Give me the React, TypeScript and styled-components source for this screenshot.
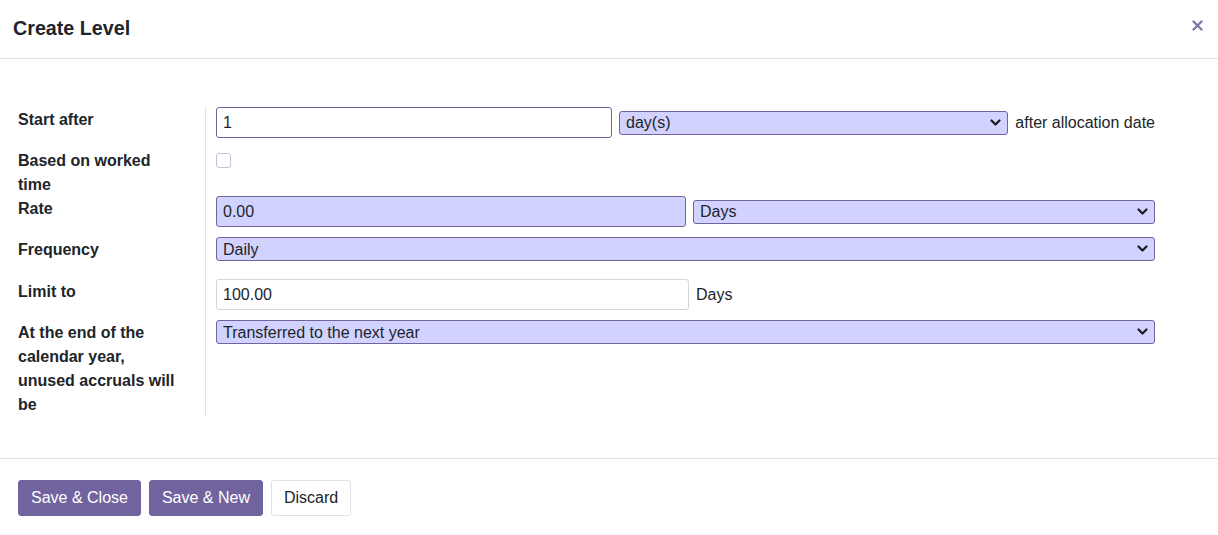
import React from "react";
import styled, { createGlobalStyle } from "styled-components";

const GlobalStyle = createGlobalStyle`
  html, body { margin: 0; padding: 0; background: #ffffff; }
  body { font-family: "Liberation Sans", Arial, sans-serif; color: #212529; }
  * { box-sizing: border-box; }
`;

const Dialog = styled.div`
  width: 1218px;
  min-height: 535px;
  background: #fff;
  display: flex;
  flex-direction: column;
  & > * { flex-shrink: 0; }
`;

const Header = styled.header`
  height: 59px;
  border-bottom: 1px solid #dee2e6;
  display: flex;
  align-items: center;
  justify-content: space-between;
  padding: 0 14px 2px 13px;
`;

const Title = styled.h4`
  margin: 0;
  font-size: 19.7px;
  font-weight: 700;
  color: #212529;
  line-height: 24px;
`;

const CloseButton = styled.button`
  border: 0;
  background: transparent;
  padding: 0;
  width: 14px;
  height: 14px;
  display: flex;
  align-items: center;
  justify-content: center;
  cursor: pointer;
  margin-top: -6px;
`;

const Body = styled.div`
  padding: 48px 0 42px 18px;
  border-bottom: 1px solid #dee2e6;
`;

const FormGrid = styled.div`
  display: grid;
  grid-template-columns: 187px 950px;
`;

const Label = styled.div<{ $pb: number; $mb?: number }>`
  font-size: 16px;
  font-weight: 700;
  line-height: 24px;
  padding-top: 1px;
  padding-right: 20px;
  padding-bottom: ${(p) => p.$pb}px;
  margin-bottom: ${(p) => p.$mb ?? 0}px;
  color: #212529;
`;

const Field = styled.div<{ $pb: number }>`
  border-left: 1px solid #dee2e6;
  padding-left: 10px;
  padding-bottom: ${(p) => p.$pb}px;
  display: flex;
  align-items: flex-start;
  align-self: stretch;
  gap: 7px;
`;

const FieldLine = styled.div`
  display: flex;
  align-items: center;
  gap: 7px;
  width: 100%;
`;

const TextInput = styled.input<{ $variant: "focus" | "required" | "plain"; $width: string }>`
  height: 31px;
  font-family: inherit;
  font-size: 16px;
  color: #212529;
  padding: 0 6px;
  border-radius: 3px;
  outline: none;
  flex: 0 0 ${(p) => p.$width};
  width: ${(p) => p.$width};
  min-width: 0;
  border: 1px solid
    ${(p) => (p.$variant === "plain" ? "#d6d6d6" : "#71639e")};
  background: ${(p) => (p.$variant === "required" ? "#d2d2ff" : "#ffffff")};
`;

const SelectWrap = styled.div`
  position: relative;
  flex: 1 1 0;
  min-width: 0;
  height: 24px;
`;

const Select = styled.select`
  appearance: none;
  -webkit-appearance: none;
  width: 100%;
  height: 24px;
  border: 1px solid #71639e;
  border-radius: 3px;
  background: #d2d2ff;
  font-family: inherit;
  font-size: 16px;
  color: #212529;
  padding: 0 28px 0 6px;
  outline: none;
`;

const Chevron = styled.svg`
  position: absolute;
  right: 7px;
  top: 7px;
  pointer-events: none;
`;

const Aside = styled.span`
  font-size: 16px;
  line-height: 24px;
  white-space: nowrap;
  color: #212529;
`;

const Checkbox = styled.span`
  width: 15px;
  height: 15px;
  border: 1px solid #c3c3dc;
  border-radius: 3px;
  background: #fff;
  display: inline-block;
  margin-top: 5px;
`;

const Footer = styled.footer`
  display: flex;
  gap: 8px;
  padding: 21px 18px;
`;

const Button = styled.button<{ $primary?: boolean }>`
  height: 36px;
  padding: 0 12px;
  font-family: inherit;
  font-size: 16px;
  border-radius: 3px;
  cursor: pointer;
  border: 1px solid ${(p) => (p.$primary ? "#71639e" : "#dee2e6")};
  background: ${(p) => (p.$primary ? "#71639e" : "#ffffff")};
  color: ${(p) => (p.$primary ? "#ffffff" : "#212529")};
`;

const ChevronIcon = () => (
  <Chevron width="11" height="9" viewBox="0 0 11 9">
    <path d="M1.5 2.5l4 4 4-4" fill="none" stroke="#1a1a1a" strokeWidth="2.2" strokeLinecap="round" strokeLinejoin="round" />
  </Chevron>
);

const Dropdown = ({ value }: { value: string }) => (
  <SelectWrap>
    <Select defaultValue={value}>
      <option>{value}</option>
    </Select>
    <ChevronIcon />
  </SelectWrap>
);

export default function App() {
  return (
    <>
      <GlobalStyle />
      <Dialog>
        <Header>
          <Title>Create Level</Title>
          <CloseButton aria-label="Close">
            <svg width="11" height="11" viewBox="0 0 11 11">
              <path d="M1.5 1.5l8 8M9.5 1.5l-8 8" stroke="#7f7aa3" strokeWidth="2.4" strokeLinecap="round" />
            </svg>
          </CloseButton>
        </Header>
        <Body>
          <FormGrid>
            <Label $pb={16}>Start after</Label>
            <Field $pb={10}>
              <FieldLine>
                <TextInput $variant="focus" $width="396px" defaultValue="1" />
                <Dropdown value="day(s)" />
                <Aside>after allocation date</Aside>
              </FieldLine>
            </Field>

            <Label $pb={0} $mb={-1}>Based on worked time</Label>
            <Field $pb={0}>
              <Checkbox />
            </Field>

            <Label $pb={16}>Rate</Label>
            <Field $pb={10}>
              <FieldLine>
                <TextInput $variant="required" $width="470px" defaultValue="0.00" />
                <Dropdown value="Days" />
              </FieldLine>
            </Field>

            <Label $pb={17}>Frequency</Label>
            <Field $pb={18}>
              <Dropdown value="Daily" />
            </Field>

            <Label $pb={16}>Limit to</Label>
            <Field $pb={10}>
              <FieldLine>
                <TextInput $variant="plain" $width="473px" defaultValue="100.00" />
                <Aside>Days</Aside>
              </FieldLine>
            </Field>

            <Label $pb={0} $mb={-1}>At the end of the calendar year, unused accruals will be</Label>
            <Field $pb={0}>
              <Dropdown value="Transferred to the next year" />
            </Field>
          </FormGrid>
        </Body>
        <Footer>
          <Button $primary>Save &amp; Close</Button>
          <Button $primary>Save &amp; New</Button>
          <Button>Discard</Button>
        </Footer>
      </Dialog>
    </>
  );
}
